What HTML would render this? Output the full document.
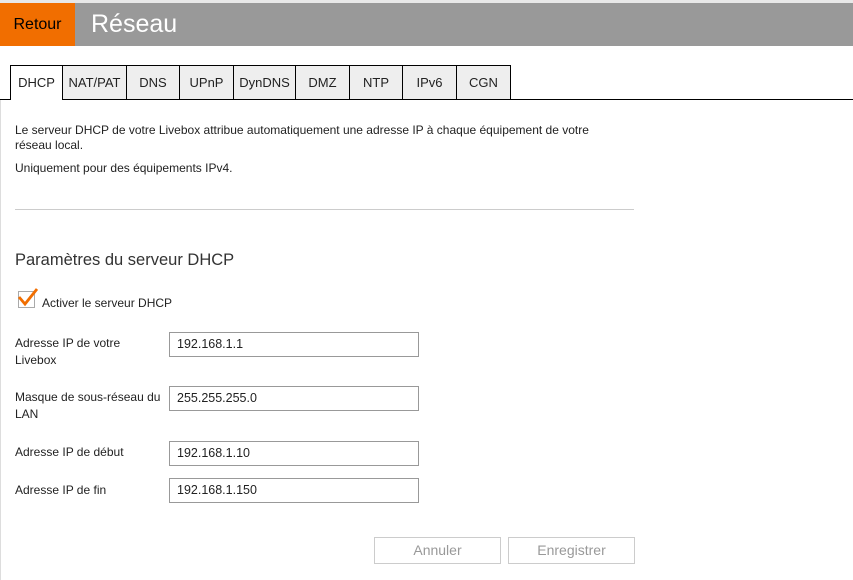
<!DOCTYPE html><html><head><meta charset="utf-8"><style>
body{margin:0;width:853px;height:580px;background:#fff;font-family:"Liberation Sans",sans-serif;position:relative;overflow:hidden;color:#222}
.a{position:absolute}
.tab{position:absolute;top:65px;height:34px;border:1px solid #000;border-left:none;border-bottom:none;background:#eee;font-size:13px;line-height:34px;text-align:center;box-sizing:border-box}
.lbl{position:absolute;left:15px;font-size:12px;line-height:17px}
.inp{position:absolute;left:169px;width:250px;height:25px;border:1px solid #999;box-sizing:border-box;font-size:12.5px;line-height:23px;padding-left:7px}
.btn{position:absolute;top:537px;height:27px;width:127px;border:1px solid #ccc;box-sizing:border-box;color:#999;font-size:14px;line-height:25px;text-align:center}
</style></head><body>
<div class="a" style="left:0;top:0;width:853px;height:3px;background:#e8e8e8"></div>
<div class="a" style="left:0;top:3px;width:853px;height:43px;background:#999"></div>
<div class="a" style="left:0;top:3px;width:75px;height:43px;background:#f16e00;color:#000;font-size:16px;line-height:43px;text-align:center">Retour</div>
<div class="a" style="left:91px;top:4px;color:#fff;font-size:25px;line-height:40px">Réseau</div>
<div class="a" style="left:0;top:99px;width:853px;height:1px;background:#000"></div>
<div class="a" style="left:0;top:100px;width:1px;height:480px;background:#ddd"></div>
<div class="tab" style="left:10px;width:53px;height:35px;background:#fff;border-left:1px solid #000">DHCP</div>
<div class="tab" style="left:63px;width:64px">NAT/PAT</div>
<div class="tab" style="left:127px;width:53px">DNS</div>
<div class="tab" style="left:180px;width:54px">UPnP</div>
<div class="tab" style="left:234px;width:62px">DynDNS</div>
<div class="tab" style="left:296px;width:54px">DMZ</div>
<div class="tab" style="left:350px;width:53px">NTP</div>
<div class="tab" style="left:403px;width:54px">IPv6</div>
<div class="tab" style="left:457px;width:54px">CGN</div>
<div class="a" style="left:15px;top:123px;width:605px;font-size:12px;line-height:15px">Le serveur DHCP de votre Livebox attribue automatiquement une adresse IP à chaque équipement de votre réseau local.</div>
<div class="a" style="left:15px;top:161px;font-size:12px">Uniquement pour des équipements IPv4.</div>
<div class="a" style="left:15px;top:209px;width:619px;height:1px;background:#ccc"></div>
<div class="a" style="left:15px;top:251px;font-size:16.5px;color:#333">Paramètres du serveur DHCP</div>
<div class="a" style="left:18px;top:291px;width:17px;height:17px;border:1px solid #aaa;box-sizing:border-box"></div>
<svg class="a" style="left:16px;top:286px" width="24" height="22"><path d="M3 11 L9 18 L21 3" stroke="#f16e00" stroke-width="2.8" fill="none"/></svg>
<div class="a" style="left:42px;top:296px;font-size:12px">Activer le serveur DHCP</div>
<div class="lbl" style="top:335px">Adresse IP de votre<br>Livebox</div>
<div class="inp" style="top:332px">192.168.1.1</div>
<div class="lbl" style="top:389px">Masque de sous-réseau du<br>LAN</div>
<div class="inp" style="top:386px">255.255.255.0</div>
<div class="lbl" style="top:444px">Adresse IP de début</div>
<div class="inp" style="top:441px">192.168.1.10</div>
<div class="lbl" style="top:482px">Adresse IP de fin</div>
<div class="inp" style="top:478px">192.168.1.150</div>
<div class="btn" style="left:374px">Annuler</div>
<div class="btn" style="left:508px">Enregistrer</div>
</body></html>
